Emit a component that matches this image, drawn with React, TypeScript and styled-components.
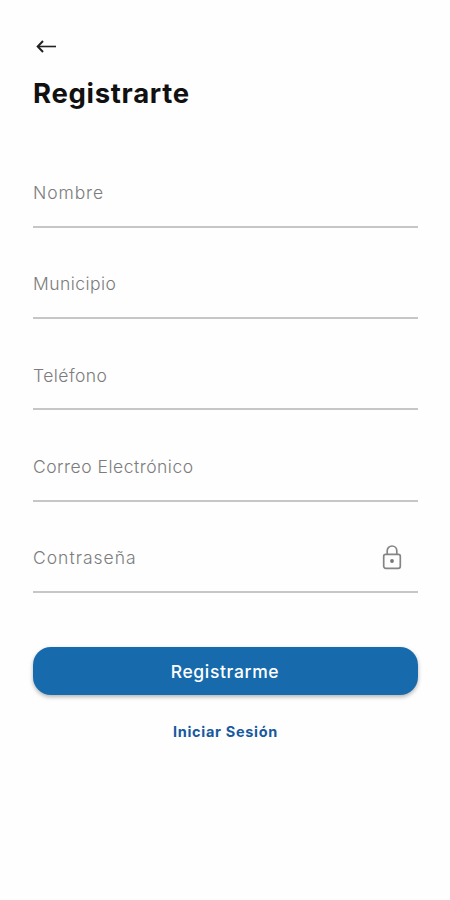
import React from "react";
import styled, { createGlobalStyle } from "styled-components";

const GlobalStyle = createGlobalStyle`
  *, *::before, *::after { box-sizing: border-box; }
  body { margin: 0; background: #fefefe; }
`;

const Screen = styled.main`
  display: flex;
  flex-direction: column;
  width: 450px;
  height: 900px;
  padding: 36px 32px 0 33px;
  background: #fefefe;
  font-family: Inter, "Open Sans", sans-serif;
  overflow: hidden;
`;

const BackButton = styled.button`
  display: flex;
  width: 26px;
  height: 21px;
  padding: 0;
  border: 0;
  background: none;
`;

const Title = styled.h1`
  height: 36px;
  margin: 18px 0 0;
  color: #111;
  font-size: 27.5px;
  font-weight: 700;
  line-height: 36px;
  letter-spacing: 0.7px;
  white-space: nowrap;
`;

const Form = styled.form`
  display: flex;
  flex-direction: column;
  margin: 25.5px 0 0;
`;

const Field = styled.label`
  display: flex;
  align-items: flex-end;
  justify-content: space-between;
  height: 91.3px;
  padding: 0 16px 18.8px 0;
  border-bottom: 2px solid #c6c6c6;
`;

const FieldName = styled.span<{ $tracking: number }>`
  color: #7c7c7c;
  font-size: 17.5px;
  font-weight: 300;
  line-height: 28px;
  letter-spacing: ${(p) => p.$tracking}px;
  white-space: nowrap;
`;

const SubmitButton = styled.button`
  height: 48.5px;
  margin: 54px 0 0;
  padding: 0 1px 0 0;
  border: 0;
  border-radius: 18px;
  background: #176bac;
  box-shadow: 0 2px 4px rgba(0, 0, 0, 0.3);
  color: #fff;
  font-family: inherit;
  font-size: 17.5px;
  font-weight: 500;
  letter-spacing: 0.65px;
`;

const LoginLink = styled.a`
  align-self: center;
  margin-top: 26px;
  color: #17599f;
  font-size: 14.5px;
  font-weight: 700;
  line-height: 22px;
  letter-spacing: 0.7px;
`;

const fields = [
  { name: "Nombre", tracking: 0.9 },
  { name: "Municipio", tracking: 0.45 },
  { name: "Teléfono", tracking: 0.45 },
  { name: "Correo Electrónico", tracking: 0.5 },
  { name: "Contraseña", tracking: 1.0, locked: true },
];

const ArrowIcon = () => (
  <svg width="26" height="21" viewBox="0 0 26 21" fill="none" stroke="#222">
    <path d="M5 10.5H23" strokeWidth="1.6" />
    <path d="M10 5L4.7 10.5L10 16" strokeWidth="2" />
  </svg>
);

const LockIcon = () => (
  <svg width="20" height="27" viewBox="0 0 20 27" fill="none" stroke="#858585" strokeWidth="1.7">
    <rect x="1.7" y="9.3" width="16.6" height="14" rx="2" />
    <path d="M5.2 9.3V5.8a4.8 4.8 0 0 1 9.6 0v3.5" />
    <circle cx="10" cy="16" r="1.9" fill="#777" stroke="none" />
  </svg>
);

export default function App() {
  return (
    <Screen>
      <GlobalStyle />
      <BackButton type="button" aria-label="Volver">
        <ArrowIcon />
      </BackButton>
      <Title>Registrarte</Title>
      <Form>
        {fields.map((f) => (
          <Field key={f.name}>
            <FieldName $tracking={f.tracking}>{f.name}</FieldName>
            {f.locked && <LockIcon />}
          </Field>
        ))}
        <SubmitButton type="button">Registrarme</SubmitButton>
        <LoginLink>Iniciar Sesión</LoginLink>
      </Form>
    </Screen>
  );
}
